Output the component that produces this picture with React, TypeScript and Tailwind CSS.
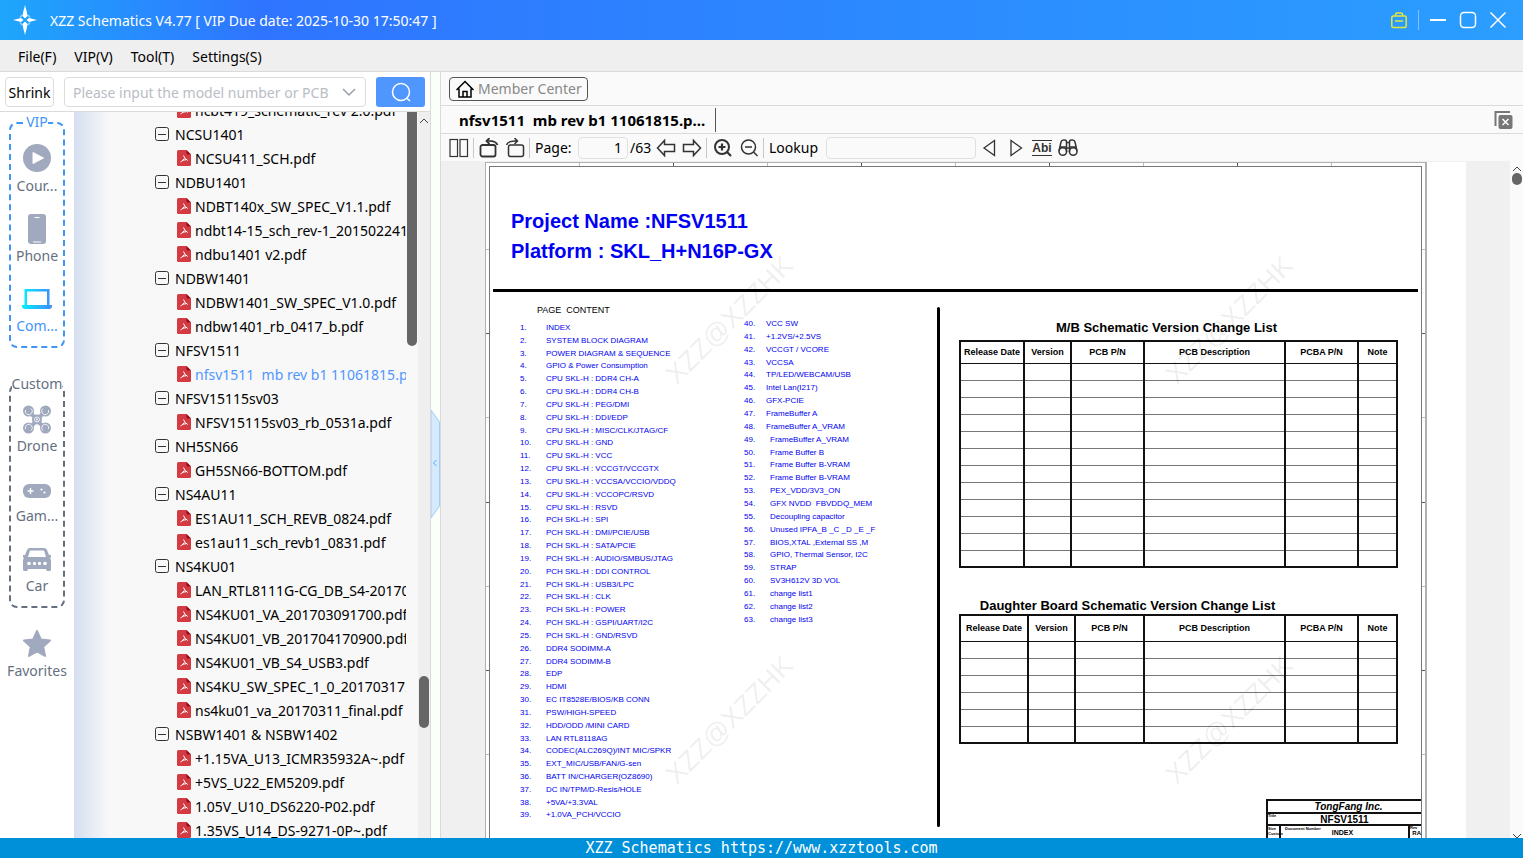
import type { ReactNode } from "react";

type TreeRow = { label: string; kind: "folder" | "file"; active?: boolean };

const folder = (label: string): TreeRow => ({ label, kind: "folder" });
const file = (label: string, active = false): TreeRow => ({ label, kind: "file", active });

const treeRows: TreeRow[] = [
  file("ncbt419_schematic_rev 2.0.pdf"),
  folder("NCSU1401"),
  file("NCSU411_SCH.pdf"),
  folder("NDBU1401"),
  file("NDBT140x_SW_SPEC_V1.1.pdf"),
  file("ndbt14-15_sch_rev-1_20150224152.pdf"),
  file("ndbu1401 v2.pdf"),
  folder("NDBW1401"),
  file("NDBW1401_SW_SPEC_V1.0.pdf"),
  file("ndbw1401_rb_0417_b.pdf"),
  folder("NFSV1511"),
  file("nfsv1511  mb rev b1 11061815.pdf", true),
  folder("NFSV15115sv03"),
  file("NFSV15115sv03_rb_0531a.pdf"),
  folder("NH5SN66"),
  file("GH5SN66-BOTTOM.pdf"),
  folder("NS4AU11"),
  file("ES1AU11_SCH_REVB_0824.pdf"),
  file("es1au11_sch_revb1_0831.pdf"),
  folder("NS4KU01"),
  file("LAN_RTL8111G-CG_DB_S4-20170316.pdf"),
  file("NS4KU01_VA_201703091700.pdf"),
  file("NS4KU01_VB_201704170900.pdf"),
  file("NS4KU01_VB_S4_USB3.pdf"),
  file("NS4KU_SW_SPEC_1_0_20170317.pdf"),
  file("ns4ku01_va_20170311_final.pdf"),
  folder("NSBW1401 & NSBW1402"),
  file("+1.15VA_U13_ICMR35932A~.pdf"),
  file("+5VS_U22_EM5209.pdf"),
  file("1.05V_U10_DS6220-P02.pdf"),
  file("1.35VS_U14_DS-9271-0P~.pdf"),
];

const contentLeft = [
  "INDEX",
  "SYSTEM BLOCK DIAGRAM",
  "POWER DIAGRAM & SEQUENCE",
  "GPIO & Power Consumption",
  "CPU SKL-H : DDR4 CH-A",
  "CPU SKL-H : DDR4 CH-B",
  "CPU SKL-H : PEG/DMI",
  "CPU SKL-H : DDI/EDP",
  "CPU SKL-H : MISC/CLK/JTAG/CF",
  "CPU SKL-H : GND",
  "CPU SKL-H : VCC",
  "CPU SKL-H : VCCGT/VCCGTX",
  "CPU SKL-H : VCCSA/VCCIO/VDDQ",
  "CPU SKL-H : VCCOPC/RSVD",
  "CPU SKL-H : RSVD",
  "PCH SKL-H : SPI",
  "PCH SKL-H : DMI/PCIE/USB",
  "PCH SKL-H : SATA/PCIE",
  "PCH SKL-H : AUDIO/SMBUS/JTAG",
  "PCH SKL-H : DDI CONTROL",
  "PCH SKL-H : USB3/LPC",
  "PCH SKL-H : CLK",
  "PCH SKL-H : POWER",
  "PCH SKL-H : GSPI/UART/I2C",
  "PCH SKL-H : GND/RSVD",
  "DDR4 SODIMM-A",
  "DDR4 SODIMM-B",
  "EDP",
  "HDMI",
  "EC IT8528E/BIOS/KB CONN",
  "PSW/HIGH-SPEED",
  "HDD/ODD /MINI CARD",
  "LAN RTL8118AG",
  "CODEC(ALC269Q)/INT MIC/SPKR",
  "EXT_MIC/USB/FAN/G-sen",
  "BATT IN/CHARGER(OZ8690)",
  "DC IN/TPM/D-Resis/HOLE",
  "+5VA/+3.3VAL",
  "+1.0VA_PCH/VCCIO",
];

const contentRight = [
  "VCC SW",
  "+1.2VS/+2.5VS",
  "VCCGT / VCORE",
  "VCCSA",
  "TP/LED/WEBCAM/USB",
  "Intel Lan(I217)",
  "GFX-PCIE",
  "FrameBuffer A",
  "FrameBuffer A_VRAM",
  "FrameBuffer A_VRAM",
  "Frame Buffer B",
  "Frame Buffer B-VRAM",
  "Frame Buffer B-VRAM",
  "PEX_VDD/3V3_ON",
  "GFX NVDD  FBVDDQ_MEM",
  "Decoupling capacitor",
  "Unused IPFA_B _C _D _E _F",
  "BIOS,XTAL ,External SS ,M",
  "GPIO, Thermal Sensor, I2C",
  "STRAP",
  "SV3H612V 3D VOL",
  "change list1",
  "change list2",
  "change list3",
];

const columns = ["Release Date", "Version", "PCB P/N", "PCB Description", "PCBA P/N", "Note"];

interface IconProps {
  size?: number;
  className?: string;
  children: ReactNode;
}

const Icon = ({ size = 20, className = "", children }: IconProps) => (
  <svg
    width={size}
    height={size}
    viewBox={`0 0 ${size} ${size}`}
    fill="none"
    stroke="currentColor"
    strokeWidth="1.5"
    className={`shrink-0 ${className}`}
    aria-hidden="true"
  >
    {children}
  </svg>
);

const Logo = () => (
  <svg width="26" height="30" viewBox="0 0 26 30" className="mr-3 shrink-0" aria-hidden="true">
    <g fill="none" stroke="#fff" strokeWidth="1.5" opacity="0.5">
      <path d="M8 12.5 A5.5 5.5 0 0 1 10.5 10 M15.5 10 A5.5 5.5 0 0 1 18 12.5 M18 17.5 A5.5 5.5 0 0 1 15.5 20 M10.5 20 A5.5 5.5 0 0 1 8 17.5" />
    </g>
    <g fill="#fff">
      <path d="M13 0 L14.8 7 L15.5 11 L13 13.5 L10.5 11 L11.2 7Z" />
      <path d="M13 30 L14.8 23 L15.5 19 L13 16.5 L10.5 19 L11.2 23Z" />
      <path d="M1 15 L9 13 L11.5 15 L9 17Z M25 15 L17 13 L14.5 15 L17 17Z" />
    </g>
  </svg>
);

const TitleBar = () => (
  <header className="flex h-10 shrink-0 items-center bg-linear-to-r from-[#1ea6fb] via-[#2f74ff] via-17% to-[#2b9eff] pl-3 pr-4 text-white">
    <Logo />
    <h1 className="flex-1 pt-[2px] text-[14px]">XZZ Schematics V4.77 [ VIP Due date: 2025-10-30 17:50:47 ]</h1>
    <button aria-label="VIP case" className="text-[#e6e63a]">
      <Icon size={18}>
        <rect x="1.8" y="5" width="14.4" height="11.5" rx="1.5" />
        <path d="M5.5 5 V3.5 Q5.5 2 7 2 H11 Q12.5 2 12.5 3.5 V5 M5 10 H13" />
      </Icon>
    </button>
    <span className="mx-[10px] h-5 w-px bg-white/40" />
    <div className="flex gap-3">
      <button aria-label="Minimize">
        <Icon size={18}>
          <path d="M1 9 H17" strokeWidth="2" />
        </Icon>
      </button>
      <button aria-label="Maximize">
        <Icon size={18}>
          <rect x="1.5" y="1.5" width="15" height="15" rx="3.5" />
        </Icon>
      </button>
      <button aria-label="Close">
        <Icon size={18}>
          <path d="M1.5 1.5 L16.5 16.5 M16.5 1.5 L1.5 16.5" />
        </Icon>
      </button>
    </div>
  </header>
);

const MenuBar = () => (
  <nav className="flex h-8 shrink-0 items-center gap-[18px] border-b border-[#dadada] bg-[#efefef] pl-[18px] pt-[2px]">
    <button>File(F)</button>
    <button>VIP(V)</button>
    <button>Tool(T)</button>
    <button>Settings(S)</button>
  </nav>
);

const SearchRow = () => (
  <div className="flex h-10 shrink-0 items-center border-b border-[#dadada] bg-white px-[5px]">
    <button className="h-[30px] w-[49px] shrink-0 rounded border border-[#dcdcdc] pt-[2px]">Shrink</button>
    <div className="ml-[10px] flex h-[30px] min-w-0 flex-1 items-center rounded border border-[#dcdcdc] px-2">
      <input
        aria-label="Model number"
        placeholder="Please input the model number or PCB"
        className="min-w-0 flex-1 pt-[2px] outline-none placeholder:text-[#b9bdc5]"
      />
      <button aria-label="Show history" className="text-[#9aa0aa]">
        <Icon size={16}>
          <path d="M2 5 L8 11 L14 5" />
        </Icon>
      </button>
    </div>
    <button
      aria-label="Search"
      className="ml-[10px] flex h-[30px] w-[49px] shrink-0 items-center justify-center rounded-[3px] bg-[#5096ff] text-white"
    >
      <Icon>
        <circle cx="10" cy="10" r="8.5" />
        <path d="M15.5 16 L19 19" />
      </Icon>
    </button>
  </div>
);

const CourseIcon = () => (
  <Icon size={30} className="text-[#a0a9bd]">
    <circle cx="15" cy="14" r="14" fill="currentColor" stroke="none" />
    <path d="M11 8.5 L21.5 14 L11 19.5Z" fill="#fff" stroke="#fff" strokeWidth="1" strokeLinejoin="round" />
  </Icon>
);

const PhoneIcon = () => (
  <Icon size={30} className="text-[#a0a9bd]">
    <rect x="6" y="0" width="18" height="30" rx="3" fill="currentColor" stroke="none" />
    <path d="M12.5 3.5 H17.5 M11 28 H19" stroke="#fff" strokeWidth="1.2" />
  </Icon>
);

const ComputerIcon = () => (
  <Icon size={30}>
    <defs>
      <linearGradient id="laptop" x1="0" x2="1" y1="0" y2="0">
        <stop offset="0" stopColor="#00f0ff" />
        <stop offset="1" stopColor="#3f8cff" />
      </linearGradient>
    </defs>
    <path
      d="M2.5 5 H27.5 V21 H30 V22 Q30 25 27 25 H3 Q0 25 0 22 V21 H2.5Z M5 7.5 V21 H25 V7.5Z"
      fill="url(#laptop)"
      fillRule="evenodd"
      stroke="none"
    />
  </Icon>
);

const DroneIcon = () => (
  <Icon size={30} className="text-[#a0a9bd]">
    <path d="M6 6 L24 26 M24 6 L6 26" strokeWidth="4" />
    <g fill="currentColor" stroke="none">
      <circle cx="6.5" cy="7" r="5.5" />
      <circle cx="23.5" cy="7" r="5.5" />
      <circle cx="6.5" cy="24" r="5.5" />
      <circle cx="23.5" cy="24" r="5.5" />
      <circle cx="15" cy="15.5" r="5" />
    </g>
    <g stroke="#fff" strokeWidth="0.8">
      <path d="M3.5 6 A3.5 3.5 0 1 0 9 4.5 M26.5 6 A3.5 3.5 0 1 1 21 4.5 M3.5 25 A3.5 3.5 0 1 1 9 26.5 M26.5 25 A3.5 3.5 0 1 0 21 26.5" />
      <circle cx="15" cy="15.5" r="2.5" />
    </g>
    <circle cx="15" cy="15.5" r="0.9" fill="#fff" stroke="none" />
  </Icon>
);

const GameIcon = () => (
  <Icon size={30} className="text-[#a0a9bd]">
    <rect x="1" y="10" width="28" height="14" rx="6" fill="currentColor" stroke="none" />
    <path d="M5.5 17 H11.5 M8.5 14 V20" stroke="#fff" />
    <g fill="#fff" stroke="none">
      <circle cx="19.5" cy="15.5" r="1.1" />
      <circle cx="22.5" cy="18.5" r="1.1" />
    </g>
  </Icon>
);

const CarIcon = () => (
  <Icon size={30} className="text-[#a0a9bd]">
    <path
      d="M8 4 H22 Q24 4 25 6 L27 11 H29 V13.5 H28 L29 16 V25.5 Q29 27 27.5 27 H25.5 Q24 27 24 25 H6 Q6 27 4.5 27 H2.5 Q1 27 1 25.5 V16 L2 13.5 H1 V11 H3 L5 6 Q6 4 8 4Z M8 6.5 L6 13 H24 L22 6.5Z"
      fill="currentColor"
      fillRule="evenodd"
      stroke="none"
    />
    <g fill="#fff" stroke="none">
      <circle cx="7" cy="19.5" r="1.8" />
      <circle cx="23" cy="19.5" r="1.8" />
      <rect x="11" y="18" width="3" height="3" rx="1" />
      <rect x="16" y="18" width="3" height="3" rx="1" />
    </g>
  </Icon>
);

const StarIcon = () => (
  <Icon size={30} className="text-[#a0a9bd]">
    <path
      d="M15 2 L18.8 10.4 L28 11.5 L21.2 17.7 L23 27 L15 22.5 L7 27 L8.8 17.7 L2 11.5 L11.2 10.4Z"
      fill="currentColor"
      strokeWidth="2"
      strokeLinejoin="round"
    />
  </Icon>
);

interface SideItemProps {
  label: string;
  icon: ReactNode;
  active?: boolean;
}

const SideItem = ({ label, icon, active }: SideItemProps) => (
  <button className={`flex flex-col items-center ${active ? "text-[#4095f7]" : "text-[#666f80]"}`}>
    {icon}
    <span className="h-6 leading-6">{label}</span>
  </button>
);

const Sidebar = () => (
  <aside className="flex w-[74px] shrink-0 flex-col items-center bg-white pt-[10px]">
    <section className="relative flex w-14 flex-col items-center gap-4 rounded-lg border-2 border-dashed border-[#4095f7] pb-2 pt-5">
      <h2 className="absolute -top-3 bg-white leading-5 text-[#4095f7]">VIP</h2>
      <SideItem label="Cour..." icon={<CourseIcon />} />
      <SideItem label="Phone" icon={<PhoneIcon />} />
      <SideItem label="Com..." icon={<ComputerIcon />} active />
    </section>
    <section className="relative mt-9 flex w-14 flex-col items-center gap-4 rounded-lg border-2 border-dashed border-[#666f80] pb-2 pt-[18px]">
      <h2 className="absolute -top-3 bg-white leading-5 text-[#666f80]">Custom</h2>
      <SideItem label="Drone" icon={<DroneIcon />} />
      <SideItem label="Gam..." icon={<GameIcon />} />
      <SideItem label="Car" icon={<CarIcon />} />
    </section>
    <div className="mt-[21px]">
      <SideItem label="Favorites" icon={<StarIcon />} />
    </div>
  </aside>
);

const PdfIcon = () => (
  <svg width="14" height="16" viewBox="0 0 14 16" className="shrink-0" aria-hidden="true">
    <path d="M1.5 0 H9.5 L14 4.5 V14.5 Q14 16 12.5 16 H1.5 Q0 16 0 14.5 V1.5 Q0 0 1.5 0Z" fill="#d43a41" />
    <path d="M9.5 0 L14 4.5 H10.5 Q9.5 4.5 9.5 3.5Z" fill="#8e1219" />
    <path
      d="M6.5 5.5 Q7.5 9 10.8 10.5 M7.2 8.5 Q6.5 10.5 3.5 12 M5 10.5 Q7 9.8 9 9.8"
      fill="none"
      stroke="#fff"
      strokeLinejoin="round"
    />
  </svg>
);

const Tree = () => (
  <div className="flex min-w-0 flex-1 bg-linear-to-r from-[#d5dff0] to-[#f8f8f8] to-10%">
    <ul className="-mt-[14px] min-w-0 flex-1 overflow-hidden whitespace-pre">
      {treeRows.map((row) => (
        <li key={row.label} className="h-6">
          {row.kind === "folder" ? (
            <button className="flex h-6 items-center gap-[6px] pl-[81px]">
              <Icon size={14} className="text-[#333]">
                <rect x="0.5" y="0.5" width="13" height="13" rx="2" strokeWidth="1" />
                <path d="M3 7.5 H11" strokeWidth="1" />
              </Icon>
              <span className="pt-[2px]">{row.label}</span>
            </button>
          ) : (
            <button className={`flex h-6 items-center gap-1 pl-[103px] ${row.active ? "text-[#5096ff]" : ""}`}>
              <PdfIcon />
              <span className="pt-[2px]">{row.label}</span>
            </button>
          )}
        </li>
      ))}
    </ul>
    <div className="ml-px w-[10px] shrink-0">
      <div className="h-[234px] rounded-b-[5px] bg-[#666]" />
    </div>
    <div className="ml-px flex w-3 shrink-0 flex-col items-center bg-[#efefef]">
      <Icon size={12} className="mt-[3px] text-[#444]">
        <path d="M2 8 L6 4 L10 8" strokeWidth="1" />
      </Icon>
      <div className="mt-[549px] h-[52px] w-[10px] shrink-0 rounded-full bg-[#666]" />
    </div>
  </div>
);

const LeftPanel = () => (
  <div className="flex w-[431px] shrink-0 flex-col border-r border-[#dadada]">
    <SearchRow />
    <div className="flex min-h-0 flex-1 overflow-hidden">
      <Sidebar />
      <Tree />
    </div>
  </div>
);

const Splitter = () => (
  <div className="flex w-[10px] shrink-0 flex-col border-r border-[#dadada] bg-[#fbfffa] pt-[337px]">
    <button aria-label="Collapse panel">
      <svg width="9" height="110" viewBox="0 0 9 110" aria-hidden="true">
        <path d="M0 1 L8.5 13 V97 L0 109Z" fill="#d6eafe" stroke="#9fccf8" />
        <path d="M5.5 51 L2.5 54 L5.5 57" fill="none" stroke="#5aaaf5" />
      </svg>
    </button>
  </div>
);

const Separator = () => <span className="ml-1 mr-[5px] h-5 w-px shrink-0 bg-[#c8c8c8]" />;

const ToolButton = ({ label, children }: { label: string; children: ReactNode }) => (
  <button aria-label={label} className="w-5 shrink-0 text-[#333]">
    <Icon>{children}</Icon>
  </button>
);

const Toolbar = () => (
  <div className="flex h-[27px] shrink-0 items-center bg-[#fafafa] pl-2">
    <ToolButton label="Two pages">
      <rect x="1" y="1.5" width="7.5" height="17" strokeWidth="1.2" />
      <rect x="11" y="1.5" width="7.5" height="17" strokeWidth="1.2" />
    </ToolButton>
    <Separator />
    <div className="flex gap-[6px]">
      <ToolButton label="Rotate left">
        <rect x="1.5" y="7" width="15" height="11.5" rx="2" strokeWidth="1.8" />
        <path d="M18.5 7 Q17 2.5 8 3 M10.5 0 L7.5 3 L10.5 6" strokeWidth="1.8" />
      </ToolButton>
      <ToolButton label="Rotate right">
        <rect x="3.5" y="7" width="15" height="11.5" rx="2" />
        <path d="M1.5 7 Q3 2.5 12 3 M9.5 0 L12.5 3 L9.5 6" />
      </ToolButton>
    </div>
    <Separator />
    <label htmlFor="page" className="w-[43px] shrink-0">
      Page:
    </label>
    <input
      id="page"
      defaultValue="1"
      className="h-[22px] w-[50px] shrink-0 rounded-sm border border-[#e0e0e0] pr-[5px] text-right outline-none"
    />
    <span className="w-[28px] shrink-0 pl-[2px]">/63</span>
    <div className="flex gap-[6px]">
      <ToolButton label="Previous page">
        <path d="M1.5 10 L8.5 2.5 V6.5 H18.5 V13.5 H8.5 V17.5Z" />
      </ToolButton>
      <ToolButton label="Next page">
        <path d="M18.5 10 L11.5 2.5 V6.5 H1.5 V13.5 H11.5 V17.5Z" />
      </ToolButton>
    </div>
    <Separator />
    <div className="flex gap-[6px] pl-px">
      <ToolButton label="Zoom in">
        <circle cx="9" cy="9" r="7" strokeWidth="2" />
        <path d="M5.5 9 H12.5 M9 5.5 V12.5 M14 14 L18 18" strokeWidth="2.2" />
      </ToolButton>
      <ToolButton label="Zoom out">
        <circle cx="9.5" cy="9" r="7" />
        <path d="M6 9 H13 M14.5 14 L18.5 18" />
      </ToolButton>
    </div>
    <Separator />
    <label htmlFor="lookup" className="w-[57px] shrink-0">
      Lookup
    </label>
    <input id="lookup" className="h-[22px] w-[150px] shrink-0 rounded-sm border border-[#e0e0e0] outline-none" />
    <div className="ml-1 flex gap-[6px]">
      <ToolButton label="Find previous">
        <path d="M4 10 L14.5 2.5 V17.5Z" strokeWidth="1.3" />
      </ToolButton>
      <ToolButton label="Find next">
        <path d="M15.5 10 L5 2.5 V17.5Z" strokeWidth="1.3" />
      </ToolButton>
      <button
        aria-label="Match whole word"
        className="mt-[2px] h-4 w-5 shrink-0 border-y border-[#333] font-['Liberation_Sans',sans-serif] text-[12px] font-bold leading-[14px] text-[#333]"
      >
        Abi
      </button>
      <ToolButton label="Find">
        <path d="M1 13 L3 4 Q3.5 2 5.5 2 H6.5 Q8.5 2 8.5 4 V14 M19 13 L17 4 Q16.5 2 14.5 2 H13.5 Q11.5 2 11.5 4 V14 M8.5 4.5 H11.5 M8.5 10 H11.5 M2 9 H8 M12 9 H18" />
        <circle cx="4.8" cy="13.5" r="3.8" />
        <circle cx="15.2" cy="13.5" r="3.8" />
      </ToolButton>
    </div>
  </div>
);

interface ContentListProps {
  items: string[];
  start: number;
  className: string;
}

// entries 49 and up sit a little further in
const ContentList = ({ items, start, className }: ContentListProps) => (
  <ol className={`flex flex-col justify-between whitespace-pre text-[8px] leading-3 text-[#0000f0] ${className}`}>
    {items.map((item, i) => (
      <li key={start + i} className="flex">
        <span className={start === 40 ? "w-[22px]" : "w-[26px]"}>{start + i}.</span>
        <span className={start + i >= 49 ? "pl-1" : ""}>{item}</span>
      </li>
    ))}
  </ol>
);

interface ChangeTableProps {
  title: string;
  rows: number;
  widths: string[];
  className?: string;
  titleClass: string;
  headClass: string;
}

const ChangeTable = ({ title, rows, widths, className = "", titleClass, headClass }: ChangeTableProps) => (
  <table className={`w-full table-fixed border-collapse border-2 border-[#111] ${className}`}>
    <caption className={`whitespace-nowrap text-[13px] font-bold leading-4 ${titleClass}`}>{title}</caption>
    <thead>
      <tr className={headClass}>
        {columns.map((column, i) => (
          <th
            key={column}
            className={`whitespace-nowrap border-x-2 border-b border-[#111] p-0 text-center text-[9px] leading-3 ${widths[i]}`}
          >
            {column}
          </th>
        ))}
      </tr>
    </thead>
    <tbody>
      {Array.from({ length: rows }, (_, r) => (
        <tr key={r} className="h-[17px]">
          {columns.map((column) => (
            <td key={column} className="border-x-2 border-y border-x-[#111] border-y-[#777] p-0" />
          ))}
        </tr>
      ))}
    </tbody>
  </table>
);

const Watermark = ({ className }: { className: string }) => (
  <span
    aria-hidden="true"
    className={`pointer-events-none absolute -rotate-45 whitespace-nowrap text-[27px] leading-8 text-black/8 ${className}`}
  >
    XZZ@XZZHK
  </span>
);

const TitleBlock = () => (
  <div className="mt-auto w-[155px] shrink-0 self-end border-l-2 border-t-2 border-[#111] text-center font-bold leading-3">
    <p className="h-[11px] pl-2 text-[10px] italic leading-[11px]">TongFang Inc.</p>
    <div className="flex h-[14px] border-y-2 border-[#111] text-[10px] leading-[11px]">
      <span className="w-3 text-left text-[4px] leading-[4px]">Title</span>
      <span className="flex-1 pr-3">NFSV1511</span>
    </div>
    <div className="flex h-3 text-[8px]">
      <span className="w-[13px] border-r-2 border-[#111] text-left text-[4px] leading-[5px]">
        Size
        <br />
        Custom
      </span>
      <span className="w-9 whitespace-nowrap pl-1 text-left text-[4px] leading-[5px]">Document Number</span>
      <span className="flex-1 pr-10 text-[7px] leading-[14px]">INDEX</span>
      <span className="w-[13px] shrink-0 border-l-2 border-[#111] text-left text-[4px] leading-[4px]">
        Rev
        <span className="block text-right text-[6px] leading-[7px]">RA</span>
      </span>
    </div>
  </div>
);

// zone marks between the two frame lines
const ZoneMarks = ({ side }: { side: "top" | "left" | "right" }) => {
  const count = side === "top" ? 9 : 7;
  return (
    <div className={side === "top" ? "flex h-[3px] justify-evenly" : "flex w-[3px] shrink-0 flex-col justify-evenly"}>
      {Array.from({ length: count }, (_, i) => (
        <span
          key={i}
          className={`${side === "top" ? "h-full w-px" : "h-px w-full"} ${i % 2 ? "bg-[#555]" : "bg-[#bbb]"}`}
        />
      ))}
    </div>
  );
};

const SchematicPage = () => (
  <article className="relative mt-px flex min-w-0 flex-1 bg-white pr-[39px] font-['Liberation_Sans',Arial,sans-serif] text-black">
    <div className="flex min-w-0 flex-1 flex-col border-l border-r-2 border-t border-[#b0b0b0]">
      <ZoneMarks side="top" />
      <div className="flex min-h-0 flex-1">
        <ZoneMarks side="left" />
        <div className="flex min-w-0 flex-1 flex-col border-l border-r border-t border-[#777]">
          <div className="pl-[21px] pt-[39px] text-[20px] font-bold leading-[30px] text-[#0000f5]">
            <h2>Project Name :NFSV1511</h2>
            <h2>Platform : SKL_H+N16P-GX</h2>
          </div>
          <hr className="mx-[3px] mt-[23px] border-t-[3px] border-black" />
          <div className="flex min-h-0 flex-1">
            <div className="w-[224px] shrink-0 pl-[30px] pt-3">
              <h3 className="whitespace-pre pl-[17px] text-[9px] leading-3">PAGE  CONTENT</h3>
              <ContentList items={contentLeft} start={1} className="mt-[6px] h-[500px]" />
            </div>
            <ContentList items={contentRight} start={40} className="mt-[26px] h-[308px] w-[223px] shrink-0 pl-[30px]" />
            <div className="mt-[15px] h-[520px] w-[3px] shrink-0 rounded-full bg-black" />
            <div className="flex min-w-0 flex-1 flex-col">
              <div className="pl-[19px] pr-[26px] pt-7">
                <ChangeTable
                  title="M/B Schematic Version Change List"
                  rows={12}
                  widths={["w-[64px]", "w-[47px]", "w-[73px]", "w-[141px]", "w-[73px]", "w-[39px]"]}
                  titleClass="pb-1 pr-6"
                  headClass="h-[22px]"
                />
                <ChangeTable
                  title="Daughter Board Schematic Version Change List"
                  rows={6}
                  widths={["w-[68px]", "w-[47px]", "w-[69px]", "w-[141px]", "w-[73px]", "w-[39px]"]}
                  className="mt-[30px]"
                  titleClass="pr-[102px]"
                  headClass="h-[26px]"
                />
              </div>
              <TitleBlock />
            </div>
          </div>
        </div>
        <ZoneMarks side="right" />
      </div>
    </div>
    <Watermark className="left-[161px] top-[142px]" />
    <Watermark className="left-[661px] top-[142px]" />
    <Watermark className="left-[161px] top-[542px]" />
    <Watermark className="left-[661px] top-[542px]" />
  </article>
);

const Viewer = () => (
  <main className="flex min-w-0 flex-1 flex-col">
    <div className="flex h-[34px] shrink-0 items-center border-b border-[#dadada] bg-[#fafafa] pl-2">
      <button className="flex h-6 items-center gap-[3px] rounded border border-[#555] px-[5px] text-[#888]">
        <Icon className="text-black">
          <path d="M1.5 11 L10 2.5 L18.5 11 M4 9.5 V18 H16 V9.5 M8 18 V12.5 H12 V18" />
        </Icon>
        Member Center
      </button>
    </div>
    <div className="flex h-7 shrink-0 items-center justify-between border-b border-[#dadada] bg-[#fafafa] pr-[10px]">
      <button className="h-6 whitespace-pre border-r border-[#555] pl-[18px] pr-[10px] text-[15px] font-bold">
        nfsv1511  mb rev b1 11061815.p...
      </button>
      <button aria-label="Close all tabs" className="text-[#777]">
        <Icon>
          <path d="M2.5 16 V2 H17" strokeWidth="2" />
          <rect x="5.5" y="5" width="14" height="14" rx="2" fill="currentColor" stroke="none" />
          <path d="M9.5 9 L15.5 15 M15.5 9 L9.5 15" stroke="#fff" />
        </Icon>
      </button>
    </div>
    <Toolbar />
    <div className="flex min-h-0 flex-1 overflow-hidden bg-[#f0f0f0] pl-11">
      <SchematicPage />
      <div className="ml-11 flex w-[13px] shrink-0 flex-col items-center bg-[#fafafa]">
        <Icon size={12} className="text-[#444]">
          <path d="M2 10 L6 6 L10 10" strokeWidth="1" />
        </Icon>
        <div className="h-3 w-[10px] rounded-full bg-[#666]" />
        <Icon size={12} className="mt-auto text-[#444]">
          <path d="M2 8 L6 12 L10 8" strokeWidth="1" />
        </Icon>
      </div>
    </div>
  </main>
);

export default function App() {
  return (
    <div className="flex h-screen flex-col overflow-hidden bg-white font-['Noto_Sans',sans-serif] text-[14px] leading-5 text-black">
      <TitleBar />
      <MenuBar />
      <div className="flex min-h-0 flex-1">
        <LeftPanel />
        <Splitter />
        <Viewer />
      </div>
      <footer className="h-5 shrink-0 bg-[#0090d9] text-center font-['DejaVu_Sans_Mono',monospace] text-[15px] leading-5 text-white">
        XZZ Schematics https://www.xzztools.com
      </footer>
    </div>
  );
}
